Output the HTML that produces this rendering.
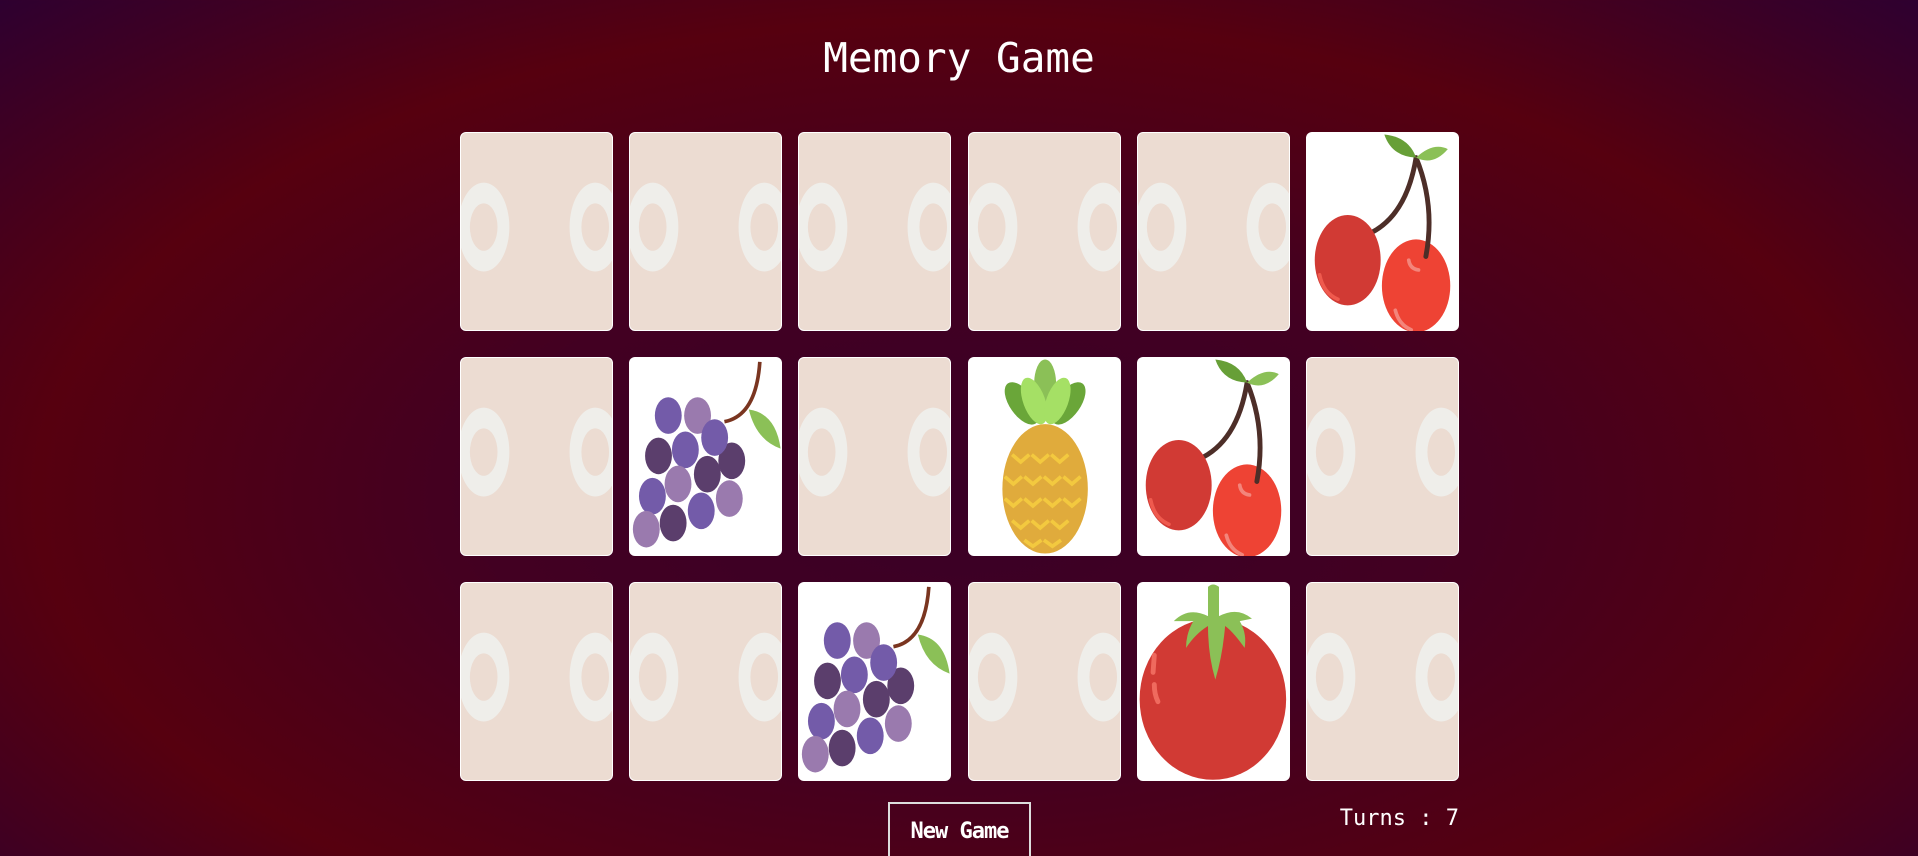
<!DOCTYPE html>
<html><head><meta charset="utf-8"><style>
html,body{margin:0;padding:0;width:1918px;height:856px;overflow:hidden}
body{background:radial-gradient(ellipse farthest-corner at 50% 58%,#3a0026 0%,#420022 35%,#56000f 68%,#2e0030 100%);font-family:"DejaVu Sans Mono","Liberation Mono",monospace;color:#fff;position:relative}
h1{position:absolute;top:28px;left:0;width:100%;text-align:center;margin:0;font-weight:normal;font-size:41px;line-height:60px}
.c{position:absolute;width:153px;height:199px;border-radius:6px;overflow:hidden;box-sizing:border-box}
.b{background:#ecdcd2;border:1.5px solid #fff}
.f{background:#fff}
.c svg{position:absolute;left:0;top:0;width:100%;height:100%}
.btn{position:absolute;left:888px;top:802px;width:143px;height:60px;box-sizing:border-box;border:2px solid #ddd;font-weight:bold;font-size:22px;text-align:center;line-height:56px;letter-spacing:-1px}
.t{position:absolute;right:459px;top:806px;font-size:22px}
</style></head><body>
<h1>Memory Game</h1>
<svg width="0" height="0" style="position:absolute"><defs>
<g id="back"><ellipse cx="23" cy="95" rx="26" ry="45" fill="#efeeea"/><ellipse cx="23" cy="95" rx="14" ry="24" fill="#ecdcd2"/><ellipse cx="136" cy="95" rx="26" ry="45" fill="#efeeea"/><ellipse cx="136" cy="95" rx="14" ry="24" fill="#ecdcd2"/></g>
<g id="cherry">
<path d="M50 84 Q82 70 90 21" stroke="#4d2e28" stroke-width="4" fill="none" stroke-linecap="round"/>
<ellipse cx="34" cy="105" rx="27" ry="37" fill="#d13a34"/>
<ellipse cx="90" cy="126" rx="28" ry="38" fill="#ee4334"/>
<path d="M90 21 Q106 60 98 102" stroke="#4d2e28" stroke-width="4" fill="none" stroke-linecap="round"/>
<path d="M64 2 Q84 4 90 21 Q70 20 64 2Z" fill="#679f37"/>
<path d="M90 21 Q104 8 116 14 Q104 28 90 21Z" fill="#8bc057"/>
<path d="M11 117 Q14 132 26 137" stroke="#ef5a4e" stroke-width="3" fill="none" stroke-linecap="round"/>
<path d="M73 146 Q76 158 86 162" stroke="#f3857b" stroke-width="3" fill="none" stroke-linecap="round"/>
<path d="M84 105 Q85 112 92 113" stroke="#f3857b" stroke-width="3" fill="none" stroke-linecap="round"/>
</g>
<g id="grape">
<path d="M78 53 Q104 48 107 4" stroke="#7a3520" stroke-width="3" fill="none"/>
<path d="M98 43 Q120 46 124 75 Q104 68 98 43Z" fill="#8bc057"/>
<g>
<ellipse cx="32" cy="48" rx="11" ry="15" fill="#735ba9"/>
<ellipse cx="56" cy="48" rx="11" ry="15" fill="#9a7aae"/>
<ellipse cx="84" cy="85" rx="11" ry="15" fill="#5b3e6c"/>
<ellipse cx="24" cy="81" rx="11" ry="15" fill="#5b3e6c"/>
<ellipse cx="46" cy="76" rx="11" ry="15" fill="#735ba9"/>
<ellipse cx="70" cy="66" rx="11" ry="15" fill="#735ba9"/>
<ellipse cx="64" cy="96" rx="11" ry="15" fill="#5b3e6c"/>
<ellipse cx="82" cy="116" rx="11" ry="15" fill="#9a7aae"/>
<ellipse cx="40" cy="104" rx="11" ry="15" fill="#9a7aae"/>
<ellipse cx="19" cy="114" rx="11" ry="15" fill="#735ba9"/>
<ellipse cx="59" cy="126" rx="11" ry="15" fill="#735ba9"/>
<ellipse cx="36" cy="136" rx="11" ry="15" fill="#5b3e6c"/>
<ellipse cx="14" cy="141" rx="11" ry="15" fill="#9a7aae"/>
</g></g>
<g id="pine">
<ellipse cx="44" cy="38" rx="10" ry="20" fill="#6aa639" transform="rotate(-35 44 38)"/>
<ellipse cx="82" cy="38" rx="10" ry="20" fill="#6aa639" transform="rotate(35 82 38)"/>
<ellipse cx="63" cy="22" rx="9" ry="20" fill="#8bc057"/>
<ellipse cx="54" cy="36" rx="9" ry="20" fill="#a5e065" transform="rotate(-20 54 36)"/>
<ellipse cx="73" cy="36" rx="9" ry="20" fill="#a5e065" transform="rotate(20 73 36)"/>
<ellipse cx="63" cy="108" rx="35" ry="53" fill="#e0ab3c"/>
<g stroke="#f3c93f" stroke-width="3" fill="none">
<path d="M36 80 l7 6 l7 -6 M52 80 l7 6 l7 -6 M68 80 l7 6 l7 -6"/>
<path d="M30 98 l7 6 l7 -6 M46 98 l7 6 l7 -6 M62 98 l7 6 l7 -6 M78 98 l7 6 l7 -6"/>
<path d="M30 116 l7 6 l7 -6 M46 116 l7 6 l7 -6 M62 116 l7 6 l7 -6 M78 116 l7 6 l7 -6"/>
<path d="M36 134 l7 6 l7 -6 M52 134 l7 6 l7 -6 M68 134 l7 6 l7 -6"/>
<path d="M46 150 l7 5 l7 -5 M62 150 l7 5 l7 -5"/>
</g></g>
<g id="tom">
<ellipse cx="62" cy="96" rx="60" ry="66" fill="#d13a34"/>
<path d="M58 4 Q62 0 67 4 L67 28 Q82 20 94 30 L84 32 Q90 42 88 54 Q78 40 72 36 Q70 60 64 80 Q58 60 58 36 Q48 42 40 54 Q40 42 46 32 L30 32 Q42 20 58 28Z" fill="#8bc057"/>
<path d="M14 60 L13 74 M14 84 Q14 92 17 98" stroke="#ef6a5e" stroke-width="4" fill="none" stroke-linecap="round"/>
</g>
</defs></svg>

<div class="c b" style="left:460px;top:132px"><svg viewBox="0 0 153 199"><use href="#back"/></svg></div>
<div class="c b" style="left:629px;top:132px"><svg viewBox="0 0 153 199"><use href="#back"/></svg></div>
<div class="c b" style="left:798px;top:132px"><svg viewBox="0 0 153 199"><use href="#back"/></svg></div>
<div class="c b" style="left:968px;top:132px"><svg viewBox="0 0 153 199"><use href="#back"/></svg></div>
<div class="c b" style="left:1137px;top:132px"><svg viewBox="0 0 153 199"><use href="#back"/></svg></div>
<div class="c f" style="left:1306px;top:132px"><svg viewBox="0 0 125 163"><use href="#cherry"/></svg></div>

<div class="c b" style="left:460px;top:357px"><svg viewBox="0 0 153 199"><use href="#back"/></svg></div>
<div class="c f" style="left:629px;top:357px"><svg viewBox="0 0 125 163"><use href="#grape"/></svg></div>
<div class="c b" style="left:798px;top:357px"><svg viewBox="0 0 153 199"><use href="#back"/></svg></div>
<div class="c f" style="left:968px;top:357px"><svg viewBox="0 0 125 163"><use href="#pine"/></svg></div>
<div class="c f" style="left:1137px;top:357px"><svg viewBox="0 0 125 163"><use href="#cherry"/></svg></div>
<div class="c b" style="left:1306px;top:357px"><svg viewBox="0 0 153 199"><use href="#back"/></svg></div>

<div class="c b" style="left:460px;top:582px"><svg viewBox="0 0 153 199"><use href="#back"/></svg></div>
<div class="c b" style="left:629px;top:582px"><svg viewBox="0 0 153 199"><use href="#back"/></svg></div>
<div class="c f" style="left:798px;top:582px"><svg viewBox="0 0 125 163"><use href="#grape"/></svg></div>
<div class="c b" style="left:968px;top:582px"><svg viewBox="0 0 153 199"><use href="#back"/></svg></div>
<div class="c f" style="left:1137px;top:582px"><svg viewBox="0 0 125 163"><use href="#tom"/></svg></div>
<div class="c b" style="left:1306px;top:582px"><svg viewBox="0 0 153 199"><use href="#back"/></svg></div>

<div class="btn">New Game</div>
<div class="t">Turns : 7</div>
</body></html>
